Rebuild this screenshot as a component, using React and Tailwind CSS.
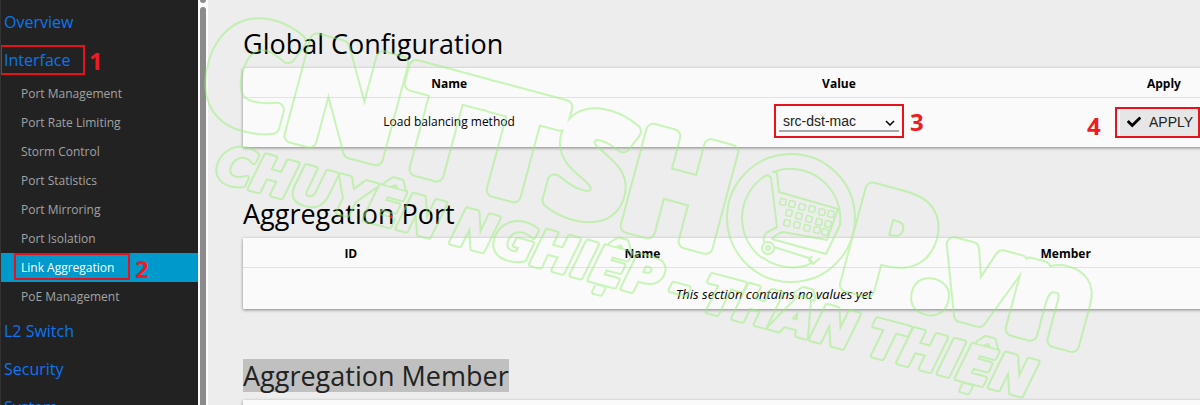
import { FaCheck } from "react-icons/fa";

const INTERFACE_LINKS = [
  "Port Management",
  "Port Rate Limiting",
  "Storm Control",
  "Port Statistics",
  "Port Mirroring",
  "Port Isolation",
  "Link Aggregation",
  "PoE Management",
];

const ACTIVE_LINK = "Link Aggregation";

const BASKET_CELLS = [
  [783, 202], [792, 204], [802, 207], [812, 209], [822, 212], [831, 214],
  [789, 213], [799, 216], [809, 219], [819, 222], [828, 224],
  [787, 223], [797, 225], [807, 228], [817, 230], [825, 232],
];

function Marker({ children, className }) {
  return (
    <span
      className={`pointer-events-none absolute text-2xl leading-6 font-bold text-[#ed1c24] ${className}`}
    >
      {children}
    </span>
  );
}

function Frame({ className }) {
  return (
    <span
      aria-hidden
      className={`pointer-events-none absolute border-2 border-[#e5131b] ${className}`}
    />
  );
}

function GroupLink({ label, children }) {
  return (
    <li>
      <div className="relative flex h-[38px] items-center pl-[3px]">
        <a href="#" className="text-base leading-6 text-[#0b76f0]">
          {label}
        </a>
        {children}
      </div>
    </li>
  );
}

function Sidebar() {
  return (
    <nav className="w-[198px] shrink-0 overflow-hidden border-l border-[#333] bg-[#222] pt-[3px]">
      <ul>
        <GroupLink label="Overview" />
        <GroupLink label="Interface">
          <Frame className="top-1 -left-px h-[30px] w-[85px]" />
          <Marker className="top-2 left-[88px]">1</Marker>
        </GroupLink>
        <li>
          <ul className="pb-px">
            {INTERFACE_LINKS.map((label) => {
              const active = label === ACTIVE_LINK;
              return (
                <li
                  key={label}
                  className={`relative flex h-[29px] items-center pt-px pl-5 text-xs leading-5 ${
                    active ? "bg-[#0099cc] text-white" : "text-[#a3a3a3]"
                  }`}
                >
                  <a href="#">{label}</a>
                  {active && (
                    <>
                      <Frame className="top-0 left-[13px] h-[27px] w-[116px]" />
                      <Marker className="top-1 left-[134px]">2</Marker>
                    </>
                  )}
                </li>
              );
            })}
          </ul>
        </li>
        <GroupLink label="L2 Switch" />
        <GroupLink label="Security" />
        <GroupLink label="System" />
      </ul>
    </nav>
  );
}

function ScrollTrack() {
  return (
    <div aria-hidden className="flex w-[10px] shrink-0 flex-col items-center gap-1 bg-[#fcfcfc]">
      <div className="h-[3px] w-1.5 rounded-b-sm bg-[#8b8b8b]" />
      <div className="w-1.5 flex-1 rounded-t-sm bg-[#8b8b8b]" />
    </div>
  );
}

function Title({ children, selected }) {
  return (
    <h2 className="mb-2 text-[27px] leading-[33px]">
      <span className={selected ? "inline-block bg-[#c0c0c0] text-[#222]" : ""}>{children}</span>
    </h2>
  );
}

const TABLE =
  "w-full table-fixed border-collapse bg-[#fafafa] text-center text-xs leading-5 shadow-[0_1px_3px_rgba(0,0,0,0.45)]";

function GlobalConfiguration() {
  return (
    <section>
      <Title>Global Configuration</Title>
      <table className={TABLE}>
        <thead>
          <tr className="h-[29px] border-b border-[#e2e2e2]">
            <th className="w-[38.8%] pt-1">Name</th>
            <th className="w-[34.6%] pt-1">Value</th>
            <th className="pt-1">Apply</th>
          </tr>
        </thead>
        <tbody>
          <tr className="h-[50px]">
            <td>
              <label htmlFor="balancing">Load balancing method</label>
            </td>
            <td>
              <div className="relative mx-auto w-[120px]">
                <select
                  id="balancing"
                  className="h-5 w-full appearance-none border-b-2 border-[#a8a8a8] bg-transparent pl-1 font-['Liberation_Sans',sans-serif] text-sm leading-4 text-[#222]"
                >
                  <option>src-dst-mac</option>
                </select>
                <svg
                  aria-hidden
                  viewBox="0 0 10 6"
                  className="pointer-events-none absolute top-2 right-1 h-1.5 w-2.5 fill-none stroke-black"
                >
                  <path d="M1 1l4 4 4-4" strokeWidth="1.5" />
                </svg>
                <Frame className="-inset-x-[5px] -top-2 h-[34px]" />
                <Marker className="-top-0.5 left-[131px]">3</Marker>
              </div>
            </td>
            <td>
              <div className="relative mx-auto w-[88px]">
                <button className="flex h-7 w-full items-center gap-2 bg-[#e6e6e6] pl-[7px] font-['Liberation_Sans',sans-serif] text-sm text-[#222]">
                  <FaCheck className="size-[14px] text-black" />
                  APPLY
                </button>
                <Frame className="-top-px -left-[5px] h-[31px] w-[85px]" />
                <Marker className="top-1.5 -left-[33px]">4</Marker>
              </div>
            </td>
          </tr>
        </tbody>
      </table>
    </section>
  );
}

function AggregationPort() {
  return (
    <section>
      <Title>Aggregation Port</Title>
      <table className={TABLE}>
        <thead>
          <tr className="h-[29px] border-b border-[#e2e2e2]">
            <th className="w-[20.3%] pt-1">ID</th>
            <th className="w-[34.6%] pt-1">Name</th>
            <th className="pt-1">Member</th>
          </tr>
        </thead>
        <tbody>
          <tr className="h-[42px]">
            <td colSpan={3} className="pt-3 text-[13px] italic">
              This section contains no values yet
            </td>
          </tr>
        </tbody>
      </table>
    </section>
  );
}

function AggregationMember() {
  return (
    <section>
      <Title selected>Aggregation Member</Title>
      <div className="h-[29px] bg-[#fafafa] shadow-[0_1px_3px_rgba(0,0,0,0.45)]" />
    </section>
  );
}

function BrandWords() {
  return (
    <g fontSize="138" fontWeight="700">
      <text x="-78" y="0">CNTTSH</text>
      <text x="585" y="0">P</text>
      <text x="661" y="0">.</text>
      <text x="690" y="0" fontSize="122">vn</text>
    </g>
  );
}

function TagWords() {
  return (
    <g
      fontSize="50"
      fontWeight="700"
      fontStyle="italic"
      className="font-['DejaVu_Sans',sans-serif]"
    >
      <text x="-42" y="62">CHUYÊN</text>
      <text x="203" y="62">NGHIỆP</text>
      <text x="427" y="62">-</text>
      <text x="461" y="62">THÂN</text>
      <text x="632" y="62">THIỆN</text>
    </g>
  );
}

// Only the rim of the fattened letters shows: the mask keeps the wide stroke
// and knocks out the slightly narrower one.
function Watermark() {
  return (
    <svg
      aria-hidden
      viewBox="0 0 1200 405"
      className="pointer-events-none absolute top-0 left-0 h-[405px] w-[1200px] font-['Open_Sans',sans-serif]"
    >
      <defs>
        <mask id="rim" maskUnits="userSpaceOnUse" x="-200" y="-200" width="1300" height="600">
          <g strokeLinejoin="round">
            <g fill="#fff" stroke="#fff" strokeWidth="16">
              <BrandWords />
            </g>
            <g fill="#000" stroke="#000" strokeWidth="12">
              <BrandWords />
            </g>
          </g>
        </mask>
        <mask id="tag-rim" maskUnits="userSpaceOnUse" x="-200" y="-200" width="1300" height="600">
          <g strokeLinejoin="round">
            <g fill="#fff" stroke="#fff" strokeWidth="6">
              <TagWords />
            </g>
            <g fill="#000" stroke="#000" strokeWidth="2">
              <TagWords />
            </g>
          </g>
        </mask>
      </defs>
      <g opacity="0.5">
        <g transform="translate(270 130) rotate(15)">
          <rect x="-200" y="-200" width="1300" height="600" fill="#98f078" mask="url(#rim)" />
          <rect x="-200" y="-200" width="1300" height="600" fill="#98f078" mask="url(#tag-rim)" />
        </g>
        <g fill="none" stroke="#98f078" strokeWidth="2" strokeLinejoin="round">
          <circle cx="791" cy="218" r="64" />
          <path d="M773 172A50 50 0 0 1 840 225L826 254L772 239Q776 234 783 232L827 240L838 209L779 192L777 174Q776 171 772 172" />
          <path d="M764 242Q763 236 766 233L777 227L771 178Q769 174 765 176A50 50 0 0 0 762 258" />
          <circle cx="768" cy="248" r="6" />
          <circle cx="768" cy="248" r="2" />
          <path d="M762 257A50 50 0 0 0 808 265L812 262L809 258L774 247M812 256l-3 4 4 4 7-6" />
        </g>
        <g fill="none" stroke="#98f078" strokeWidth="1.5">
          {BASKET_CELLS.map(([x, y]) => (
            <rect
              key={`${x}-${y}`}
              x={x - 3}
              y={y - 3}
              width="6"
              height="6"
              rx="1"
              transform={`rotate(14 ${x} ${y})`}
            />
          ))}
        </g>
      </g>
      <circle cx="391" cy="216" r="1.5" fill="#e5131b" />
    </svg>
  );
}

export default function App() {
  return (
    <div className="relative flex h-screen overflow-hidden bg-[#ededed] font-['Open_Sans',sans-serif] text-black">
      <Sidebar />
      <ScrollTrack />
      <main className="min-w-0 flex-1 overflow-hidden pt-[27px] pl-[35px]">
        {/* the content is wider than the pane and runs past its right edge */}
        <div className="flex w-[111%] flex-col gap-[50px]">
          <GlobalConfiguration />
          <AggregationPort />
          <AggregationMember />
        </div>
      </main>
      <Watermark />
    </div>
  );
}
